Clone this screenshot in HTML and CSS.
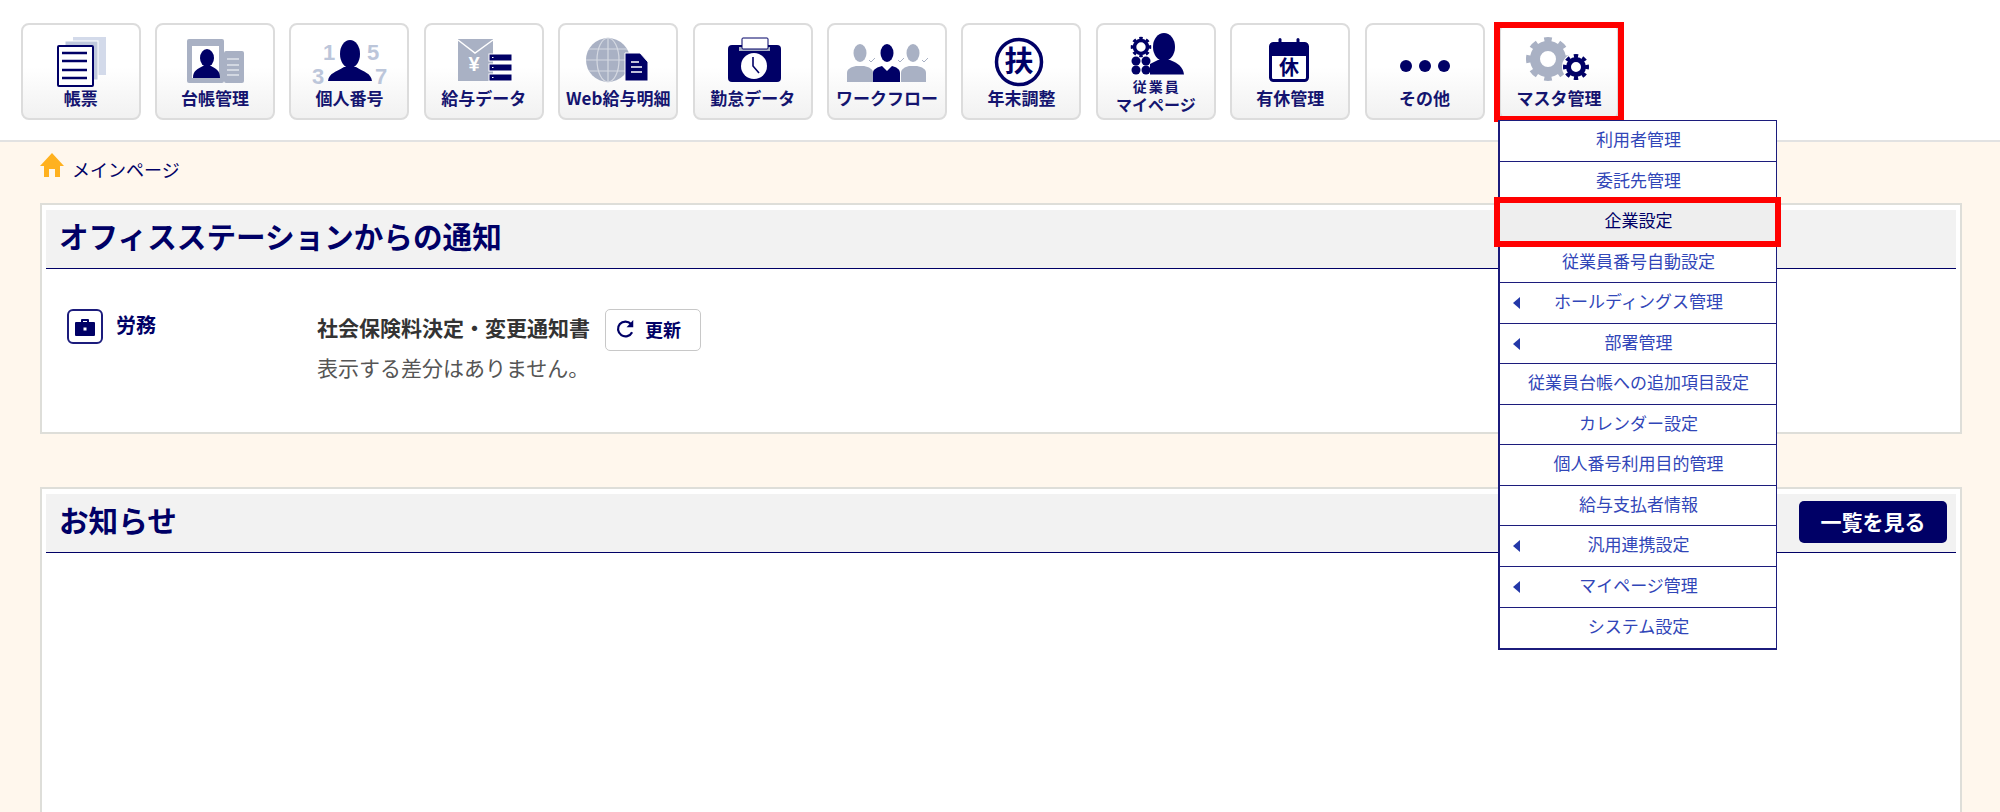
FILE: index.html
```html
<!DOCTYPE html>
<html lang="ja">
<head>
    <meta charset="UTF-8">
    <title>オフィスステーション</title>
    <link rel="stylesheet" href="styles.css">
</head>
<body>
    <header class="top-bar">
        <nav class="tabs">
            <a class="tab">
                <svg class="tab-icon" viewBox="23 33 116 58">
                    <rect class="pale" x="73" y="37" width="33" height="38"/>
                    <rect class="mid" x="65" y="41" width="33" height="39" stroke="#fff"/>
                    <rect x="58" y="46" width="35" height="40" rx="1" fill="#fff" stroke="#000066" stroke-width="2"/>
                    <path d="M62 53H87M62 61H87M62 70H87M62 78H87" stroke="#000066" stroke-width="2.4"/>
                </svg>
                <span class="tab-label">帳票</span>
            </a>
            <a class="tab">
                <svg class="tab-icon" viewBox="157 33 116 58">
                    <rect class="grey" x="187" y="39" width="37" height="44" rx="2"/>
                    <rect class="grey" x="224" y="51" width="20" height="32" rx="2"/>
                    <rect x="192" y="46" width="27" height="32" fill="#fff"/>
                    <path d="M227 59H239M227 65H239M227 70H239M227 75H239" stroke="#dfe3ea" stroke-width="1.4"/>
                    <ellipse class="navy" cx="207" cy="58" rx="7" ry="9"/>
                    <path class="navy" d="M193 78C193 70 198 69 203 66H211C216 69 220 70 220 78Z"/>
                </svg>
                <span class="tab-label">台帳管理</span>
            </a>
            <a class="tab">
                <svg class="tab-icon" viewBox="291 33 116 58">
                    <text class="digit" x="329" y="60">1</text>
                    <text class="digit" x="373" y="60">5</text>
                    <text class="digit" x="318" y="84">3</text>
                    <text class="digit" x="381" y="84">7</text>
                    <ellipse class="navy" cx="350" cy="54" rx="10" ry="14"/>
                    <path class="navy" d="M328 81C329 73 336 72 344 67H356C364 72 371 73 372 81Z"/>
                </svg>
                <span class="tab-label">個人番号</span>
            </a>
            <a class="tab">
                <svg class="tab-icon" viewBox="426 33 116 58">
                    <rect class="grey" x="458" y="39" width="35" height="42"/>
                    <path d="M458 40L475 53L493 40" fill="none" stroke="#fff" stroke-width="1.5"/>
                    <text class="yen" x="474" y="71">¥</text>
                    <rect class="navy" x="489" y="54" width="23" height="7" stroke="#fff"/>
                    <rect class="navy" x="489" y="64" width="23" height="7" stroke="#fff"/>
                    <rect class="navy" x="489" y="74" width="23" height="7" stroke="#fff"/>
                    <path d="M492 57.500h1.500M492 67.500h1.500M492 77.500h1.500" stroke="#fff"/>
                </svg>
                <span class="tab-label">給与データ</span>
            </a>
            <a class="tab">
                <svg class="tab-icon" viewBox="560 33 116 58">
                    <circle class="grey" cx="608" cy="60" r="22"/>
                    <path d="M586 60H630M589 49H627M589 71H627M608 38V82" stroke="#d5d9e2" stroke-width="1.200" fill="none"/>
                    <ellipse cx="608" cy="60" rx="11" ry="22" fill="none" stroke="#d5d9e2" stroke-width="1.200"/>
                    <path class="navy" d="M625 53H640L648 62V81H625Z" stroke="#fff"/>
                    <path d="M631 62H639M631 67H642M631 72H642" stroke="#fff" stroke-width="1.500"/>
                </svg>
                <span class="tab-label">Web給与明細</span>
            </a>
            <a class="tab">
                <svg class="tab-icon" viewBox="695 33 116 58">
                    <rect class="navy" x="728" y="45" width="53" height="37" rx="4"/>
                    <rect x="739" y="47" width="31" height="4" fill="#a9b1c4"/>
                    <rect x="742" y="38" width="26" height="11" rx="1" fill="#fff" stroke="#000066"/>
                    <circle cx="754" cy="66" r="13" fill="#fff"/>
                    <path d="M753 57V66L759 73" fill="none" stroke="#000066" stroke-width="1.600"/>
                </svg>
                <span class="tab-label">勤怠データ</span>
            </a>
            <a class="tab">
                <svg class="tab-icon" viewBox="829 33 116 58">
                    <ellipse class="grey" cx="860" cy="53" rx="6.500" ry="9"/>
                    <path class="grey" d="M847 82V73C847 69 851 67 856 66H864C869 67 873 69 873 73V82Z"/>
                    <ellipse class="grey" cx="913" cy="53" rx="6.500" ry="9"/>
                    <path class="grey" d="M901 82V73C901 69 905 67 909 66H917C922 67 926 69 926 73V82Z"/>
                    <ellipse class="navy" cx="887" cy="53" rx="6.500" ry="9"/>
                    <path class="navy" d="M873 82V73C873 69 878 67 882 66L887 71L892 66C896 67 900 69 900 73V82Z"/>
                    <path d="M869 60L871 62L875 58M898 60L900 62L904 58M922 60L924 62L928 58" fill="none" stroke="#a9b1c4"/>
                </svg>
                <span class="tab-label">ワークフロー</span>
            </a>
            <a class="tab">
                <svg class="tab-icon" viewBox="964 33 116 58">
                    <circle cx="1020" cy="62" r="22.500" fill="#fff" stroke="#000066" stroke-width="3.500"/>
                    <text class="kanji" x="1020" y="72" font-size="29">扶</text>
                </svg>
                <span class="tab-label">年末調整</span>
            </a>
            <a class="tab">
                <svg class="tab-icon" viewBox="1098 33 116 58">
                    <circle class="gear-ring" cx="1141" cy="47" r="6.500" stroke="#000066" stroke-width="3.600"/>
                    <circle class="gear-teeth" cx="1141" cy="47" r="9" stroke="#000066" stroke-width="2.500" pathLength="16"/>
                    <circle class="navy" cx="1136" cy="61" r="4.500"/>
                    <circle class="navy" cx="1146" cy="61" r="4.500"/>
                    <circle class="navy" cx="1136" cy="70" r="4.500"/>
                    <circle class="navy" cx="1146" cy="70" r="4.500"/>
                    <ellipse class="navy" cx="1164" cy="47" rx="11" ry="14"/>
                    <path class="navy" d="M1150 74.500V64L1158 60H1170C1178 63 1183 67 1184 74.500Z"/>
                </svg>
                <span class="tab-label tab-label-two">
                    <small>従業員</small>
                    <span>マイページ</span>
                </span>
            </a>
            <a class="tab">
                <svg class="tab-icon" viewBox="1233 33 116 58">
                    <rect x="1271.500" y="43.500" width="37" height="37" rx="3" fill="#fff" stroke="#000066" stroke-width="3"/>
                    <path class="navy" d="M1271 46a3 3 0 0 1 3-3H1306a3 3 0 0 1 3 3V56H1271Z"/>
                    <rect class="navy" x="1279.500" y="38" width="3" height="6" rx="1.500"/>
                    <rect class="navy" x="1297.500" y="38" width="3" height="6" rx="1.500"/>
                    <text class="kanji" x="1290" y="75" font-size="20">休</text>
                </svg>
                <span class="tab-label">有休管理</span>
            </a>
            <a class="tab">
                <svg class="tab-icon" viewBox="1367 33 116 58">
                    <circle class="navy" cx="1406" cy="66" r="6"/>
                    <circle class="navy" cx="1425" cy="66" r="6"/>
                    <circle class="navy" cx="1444" cy="66" r="6"/>
                </svg>
                <span class="tab-label">その他</span>
            </a>
            <div class="tab-wrap">
                <a class="tab">
                    <svg class="tab-icon" viewBox="1502 33 116 58">
                        <circle class="gear-ring" cx="1549" cy="59" r="13" stroke="#a9b1c4" stroke-width="10"/>
                        <circle class="gear-teeth" cx="1549" cy="59" r="19.500" stroke="#a9b1c4" stroke-width="5" pathLength="16"/>
                        <circle cx="1577" cy="67" r="14" fill="#fff"/>
                        <circle class="gear-ring" cx="1577" cy="67" r="7.500" stroke="#000066" stroke-width="5"/>
                        <circle class="gear-teeth" cx="1577" cy="67" r="11" stroke="#000066" stroke-width="4" pathLength="16"/>
                    </svg>
                    <span class="tab-label">マスタ管理</span>
                </a>
                <span class="mark mark-tab"></span>
                <ul class="menu">
                    <li>利用者管理</li>
                    <li>委託先管理</li>
                    <li class="current">企業設定<span class="mark mark-row"></span></li>
                    <li>従業員番号自動設定</li>
                    <li class="has-sub">ホールディングス管理</li>
                    <li class="has-sub">部署管理</li>
                    <li>従業員台帳への追加項目設定</li>
                    <li>カレンダー設定</li>
                    <li>個人番号利用目的管理</li>
                    <li>給与支払者情報</li>
                    <li class="has-sub">汎用連携設定</li>
                    <li class="has-sub">マイページ管理</li>
                    <li>システム設定</li>
                </ul>
            </div>
        </nav>
    </header>

    <main>
        <div class="crumb">
            <svg class="crumb-home" viewBox="0 0 24 24">
                <path d="M12 0L24 13H20V24H15V16H9V24H4V13H0Z"/>
            </svg>
            <span>メインページ</span>
        </div>

        <section class="panel">
            <div class="panel-head">
                <h2>オフィスステーションからの通知</h2>
            </div>
            <div class="notice">
                <div class="notice-type">
                    <span class="type-icon">
                        <svg viewBox="0 0 20 18" width="20" height="18">
                            <path class="navy" d="M6 4V2a1 1 0 0 1 1-1H13a1 1 0 0 1 1 1V4H19a1 1 0 0 1 1 1V17a1 1 0 0 1-1 1H1a1 1 0 0 1-1-1V5a1 1 0 0 1 1-1ZM8 3V4H12V3Z"/>
                            <rect x="8.500" y="9.500" width="3" height="3" fill="#fff"/>
                        </svg>
                    </span>
                    <span class="type-name">労務</span>
                </div>
                <div class="notice-body">
                    <div class="notice-title">
                        <strong>社会保険料決定・変更通知書</strong>
                        <button class="refresh">
                            <svg viewBox="0 0 18 18" width="20" height="20">
                                <path d="M14.500 12A6.700 6.700 0 1 1 13.500 4.500" fill="none" stroke="#000066" stroke-width="2"/>
                                <path class="navy" d="M15.500 1V7.500H9.500Z"/>
                            </svg>
                            <span>更新</span>
                        </button>
                    </div>
                    <p class="notice-text">表示する差分はありません。</p>
                </div>
            </div>
        </section>

        <section class="panel panel-news">
            <div class="panel-head">
                <h2>お知らせ</h2>
                <button class="more">一覧を見る</button>
            </div>
        </section>
    </main>
</body>
</html>
```

FILE: styles.css
```css
html, body {
    margin: 0;
    padding: 0;
}

body {
    height: 100vh;
    overflow: hidden;
    background-color: #fff7ed;
    font-family: "Noto Sans CJK JP", "Noto Sans", sans-serif;
    color: #000066;
}

/* top tabs */
.top-bar {
    background-color: #fff;
    border-bottom: 2px solid #e2e2e2;
    padding: 23px 0 20px 20.7px;
}

.tabs {
    display: flex;
    gap: 14.4px;
}

.tab-wrap {
    position: relative;
}

.tab {
    display: flex;
    flex-direction: column;
    align-items: center;
    box-sizing: border-box;
    width: 120px;
    height: 97px;
    padding-top: 8px;
    border: 2px solid #dcdcdc;
    border-radius: 8px;
    background: linear-gradient(#fff 45%, #f1f1f1);
}

.tab-icon {
    display: block;
    flex: none;
    width: 116px;
    height: 58px;
}

.tab-label {
    margin-top: -1px;
    font-size: 17px;
    font-weight: 700;
    line-height: 16px;
    color: #14146f;
    white-space: nowrap;
}

.tab-label-two {
    display: flex;
    flex-direction: column;
    align-items: center;
    margin-top: -14px;
    font-size: 16px;
    line-height: 18px;
}

.tab-label-two small {
    font-size: 14px;
    letter-spacing: 2px;
    margin-right: -2px;
}

/* svg bits */
.navy { fill: #000066; }
.grey { fill: #a9b1c4; }
.mid { fill: #bfc8dc; }
.pale { fill: #d3daea; }

.digit {
    font-family: "Liberation Sans", sans-serif;
    font-size: 22px;
    font-weight: 700;
    fill: #bcc6da;
    text-anchor: middle;
}

.yen {
    font-family: "Liberation Sans", sans-serif;
    font-size: 20px;
    font-weight: 700;
    fill: #fff;
    text-anchor: middle;
}

.kanji {
    font-weight: 700;
    fill: #000066;
    text-anchor: middle;
}

.gear-ring {
    fill: none;
}

.gear-teeth {
    fill: none;
    stroke-dasharray: 1 1;
    stroke-dashoffset: 0.5;
}

/* red marks */
.mark {
    position: absolute;
    box-sizing: border-box;
    border: 6px solid #ff0000;
    pointer-events: none;
}

.mark-tab {
    top: -1px;
    bottom: -2px;
    left: -5px;
    right: -5px;
    background: transparent;
}

.mark-row {
    top: -5px;
    bottom: -5px;
    left: -6px;
    right: -5px;
}

/* dropdown */
.menu {
    position: absolute;
    top: 97px;
    left: -0.5px;
    z-index: 5;
    box-sizing: border-box;
    width: 279px;
    margin: 0;
    padding: 0;
    list-style: none;
    background-color: #fff;
    border: 1px solid #1c1c7c;
    border-left-width: 2px;
    border-bottom-width: 2px;
}

.menu li {
    position: relative;
    box-sizing: border-box;
    height: 40.55px;
    line-height: 36px;
    text-align: center;
    font-size: 17px;
    color: #3146b8;
    border-bottom: 1px solid #1c1c7c;
    white-space: nowrap;
}

.menu li:last-child {
    border-bottom: none;
}

.menu .current {
    background-color: #eeeeee;
    color: #000066;
}

.menu .has-sub::before {
    content: "";
    position: absolute;
    left: 13px;
    top: 14px;
    border-top: 6px solid transparent;
    border-bottom: 6px solid transparent;
    border-right: 7px solid #2338a8;
}

/* breadcrumb */
.crumb {
    display: flex;
    align-items: center;
    gap: 8px;
    box-sizing: border-box;
    height: 61px;
    padding: 0 0 7px 40px;
    font-size: 18px;
}

.crumb-home {
    width: 24px;
    height: 24px;
    margin-top: -8px;
    fill: #ffb11f;
}

/* panels */
.panel {
    box-sizing: border-box;
    margin: 0 38px 53px 40px;
    padding: 5px 4px;
    background-color: #fff;
    border: 2px solid #deded9;
}

.panel-news {
    height: 325px;
    margin-bottom: 0;
    border-bottom: none;
}

.panel-head {
    display: flex;
    align-items: center;
    justify-content: space-between;
    box-sizing: border-box;
    height: 59px;
    padding: 0 9px 2px 13px;
    background-color: #f2f2f2;
    border-bottom: 1px solid #000066;
}

.panel-head h2 {
    margin: -4px 0 0;
    font-size: 29.6px;
    font-weight: 700;
    line-height: 40px;
    color: #000066;
}

.more {
    width: 148px;
    height: 42px;
    padding: 0 0 2px;
    border: none;
    border-radius: 5px;
    background-color: #000066;
    color: #fff;
    font-family: inherit;
    font-size: 21px;
    font-weight: 700;
}

.notice {
    display: grid;
    grid-template-columns: 250px 1fr;
    padding: 40px 20px 42px 21px;
}

.notice-type {
    display: flex;
    align-items: flex-start;
    gap: 13px;
}

.type-icon {
    display: flex;
    align-items: center;
    justify-content: center;
    box-sizing: border-box;
    width: 36px;
    height: 35px;
    border: 2px solid #1c1c7c;
    border-radius: 6px;
}

.type-name {
    font-size: 20px;
    font-weight: 700;
    line-height: 32px;
}

.notice-title {
    display: flex;
    align-items: center;
    gap: 15px;
}

.notice-title strong {
    margin-top: -6px;
    font-size: 21px;
    font-weight: 700;
    color: #333;
}

.refresh {
    display: flex;
    align-items: center;
    gap: 9px;
    box-sizing: border-box;
    width: 96px;
    height: 42px;
    padding: 0 0 2px 10px;
    background-color: #fff;
    border: 1px solid #c8c8c8;
    border-radius: 5px;
    color: #000066;
    font-family: inherit;
    font-size: 18px;
    font-weight: 700;
}

.notice-text {
    margin: -1px 0 0;
    padding-bottom: 1px;
    font-size: 21px;
    line-height: 34px;
    color: #555;
}
```
